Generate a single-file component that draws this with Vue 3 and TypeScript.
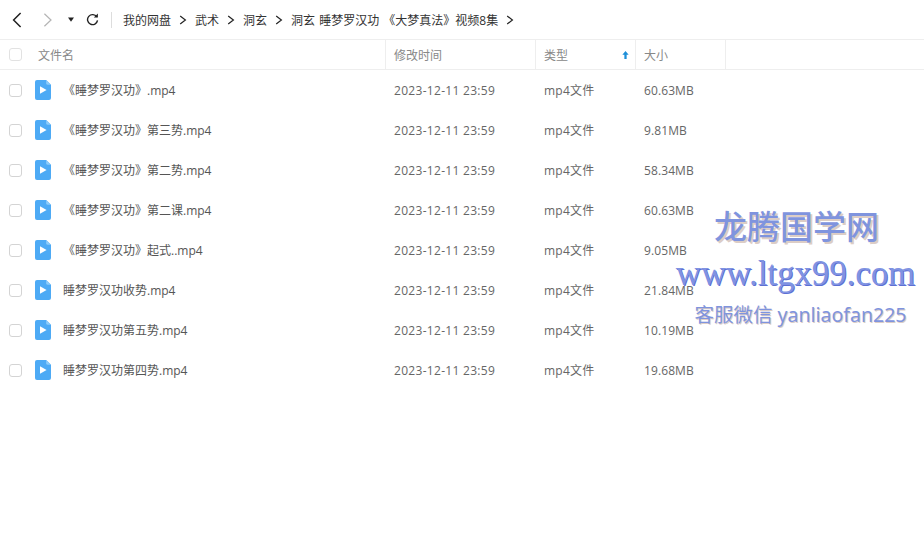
<script setup lang="ts">
interface FileRow {
  name: string
  size: string
}

const crumbs = ['我的网盘', '武术', '洞玄', '洞玄 睡梦罗汉功 《大梦真法》视频8集']

const files: FileRow[] = [
  { name: '《睡梦罗汉功》.mp4', size: '60.63MB' },
  { name: '《睡梦罗汉功》第三势.mp4', size: '9.81MB' },
  { name: '《睡梦罗汉功》第二势.mp4', size: '58.34MB' },
  { name: '《睡梦罗汉功》第二课.mp4', size: '60.63MB' },
  { name: '《睡梦罗汉功》起式..mp4', size: '9.05MB' },
  { name: '睡梦罗汉功收势.mp4', size: '21.84MB' },
  { name: '睡梦罗汉功第五势.mp4', size: '10.19MB' },
  { name: '睡梦罗汉功第四势.mp4', size: '19.68MB' },
]
</script>

<template>
  <div class="page">
    <div class="toolbar">
      <svg class="nav back" width="10" height="16" viewBox="0 0 10 16">
        <path d="M8.6 1 1.6 8l7 7" fill="none" stroke="#222" stroke-width="1.5" />
      </svg>
      <svg class="nav forward" width="10" height="14" viewBox="0 0 10 14">
        <path d="M1.4.8 8 7l-6.6 6.2" fill="none" stroke="#b4b4b4" stroke-width="1.2" />
      </svg>
      <svg class="nav caret" width="6" height="5" viewBox="0 0 6 5">
        <path d="M0 .4h6L3 4.8z" fill="#222" />
      </svg>
      <svg class="nav refresh" width="13" height="13" viewBox="0 0 14 14">
        <path d="M11.6 4.2A5.4 5.4 0 1 0 12.4 8" fill="none" stroke="#222" stroke-width="1.5" />
        <path d="M8.4 4.8h4.4V.6z" fill="#222" />
      </svg>
      <span class="divider"></span>
      <div class="crumbs">
        <template v-for="c in crumbs" :key="c">
          <span class="crumb">{{ c }}</span>
          <svg class="sep" width="8" height="10" viewBox="0 0 8 10">
            <path d="M1.2 1 6.4 5 1.2 9" fill="none" stroke="#222" stroke-width="1.2" />
          </svg>
        </template>
      </div>
    </div>

    <div class="row head">
      <div class="c-check"><span class="box head-box"></span></div>
      <div class="c-name">文件名</div>
      <div class="c-date">修改时间</div>
      <div class="c-type">
        类型
        <svg class="sort" width="7" height="10" viewBox="0 0 8 10">
          <path d="M4 .4 7.6 4.6H5.3V9.6H2.7V4.6H.4z" fill="#1d8fd8" />
        </svg>
      </div>
      <div class="c-size">大小</div>
    </div>

    <div v-for="f in files" :key="f.name" class="row item">
      <div class="c-check"><span class="box"></span></div>
      <div class="c-name">
        <svg class="file" width="16" height="20" viewBox="0 0 16 20">
          <path d="M2 0h9.2L16 4.8V18a2 2 0 0 1-2 2H2a2 2 0 0 1-2-2V2a2 2 0 0 1 2-2z" fill="#4daaf5" />
          <path d="M11.2 0 16 4.8h-3.2a1.6 1.6 0 0 1-1.6-1.6z" fill="#8ccbfa" />
          <path d="M5 6.2 11.6 10 5 13.8z" fill="#fff" />
        </svg>
        <span class="file-name">{{ f.name }}</span>
      </div>
      <div class="c-date">2023-12-11 23:59</div>
      <div class="c-type">mp4文件</div>
      <div class="c-size">{{ f.size }}</div>
    </div>

    <div class="watermark">
      <div class="wm-title">龙腾国学网</div>
      <div class="wm-url">www.ltgx99.com</div>
      <div class="wm-contact">客服微信 yanliaofan225</div>
    </div>
  </div>
</template>

<style>
html,
body {
  margin: 0;
  background: #fff;
}
</style>

<style scoped>
.page {
  position: relative;
  width: 924px;
  height: 547px;
  overflow: hidden;
  background: #fff;
  color: #666;
  font-family: "Open Sans", "Noto Sans CJK SC", sans-serif;
  font-size: 12px;
}

.toolbar {
  display: flex;
  align-items: center;
  height: 39px;
  border-bottom: 1px solid #eee;
  color: #333;
}

.nav {
  flex: none;
}

.back {
  margin-left: 12px;
}

.forward {
  margin-left: 21px;
}

.caret {
  margin-left: 15px;
}

.refresh {
  margin-left: 12px;
}

.divider {
  width: 1px;
  height: 16px;
  margin: 0 11px 0 12px;
  background: #ddd;
}

.crumbs {
  display: flex;
  align-items: center;
  word-spacing: 1px;
}

.sep {
  margin: 0 8px;
}

.row {
  display: flex;
  align-items: center;
}

.head {
  height: 29px;
  border-bottom: 1px solid #eee;
  color: #888;
}

.item {
  height: 40px;
}

.c-check {
  display: flex;
  align-items: center;
  width: 38px;
  padding-left: 9px;
  box-sizing: border-box;
}

.box {
  width: 11px;
  height: 11px;
  border: 1px solid #d4d4d4;
  border-radius: 3px;
}

.head-box {
  border-color: #e2e2e2;
}

.c-name {
  display: flex;
  align-items: center;
  width: 347px;
}

.item .c-name {
  width: 350px;
  margin-left: -3px;
}

.file {
  flex: none;
}

.file-name {
  margin-left: 12px;
  color: #555;
}

.c-date,
.c-type,
.c-size {
  display: flex;
  align-items: center;
  align-self: stretch;
  box-sizing: border-box;
  padding-left: 8px;
  border-left: 1px solid transparent;
}

.c-date {
  width: 150px;
}

.item .c-date {
  letter-spacing: 0.3px;
}

.c-type {
  position: relative;
  width: 100px;
}

.item .c-type {
  letter-spacing: 0.25px;
}

.c-size {
  width: 90px;
}

.item .c-size {
  letter-spacing: 0.1px;
}

.head .c-date,
.head .c-type,
.head .c-size {
  border-left-color: #eee;
}

.head .c-size {
  border-right: 1px solid #eee;
  width: 91px;
}

.sort {
  position: absolute;
  right: 6px;
  top: 10px;
}

.watermark {
  position: absolute;
  left: 670px;
  top: 202px;
  width: 254px;
  text-align: center;
  color: #7f94de;
  pointer-events: none;
}

.wm-title {
  height: 46px;
  margin-left: -1px;
  font-family: "Noto Sans CJK SC", sans-serif;
  font-size: 33px;
  font-weight: 500;
  line-height: 46px;
  text-shadow: 2px 2px 0 #dccdc6;
}

.wm-url {
  height: 44px;
  margin-top: 4px;
  margin-left: -3px;
  color: #8093e2;
  font-family: "Liberation Serif", serif;
  font-size: 34.8px;
  line-height: 44px;
  white-space: nowrap;
  text-shadow: 1px 1px 0 #5d70d4, 0 0 1px #fff;
}

.wm-contact {
  height: 30px;
  margin-top: 4px;
  margin-left: 7px;
  font-family: "Noto Sans", "Noto Sans CJK SC", sans-serif;
  font-size: 19.5px;
  line-height: 30px;
  white-space: nowrap;
  text-shadow: 1px 1px 0 #dccdc6;
}
</style>
